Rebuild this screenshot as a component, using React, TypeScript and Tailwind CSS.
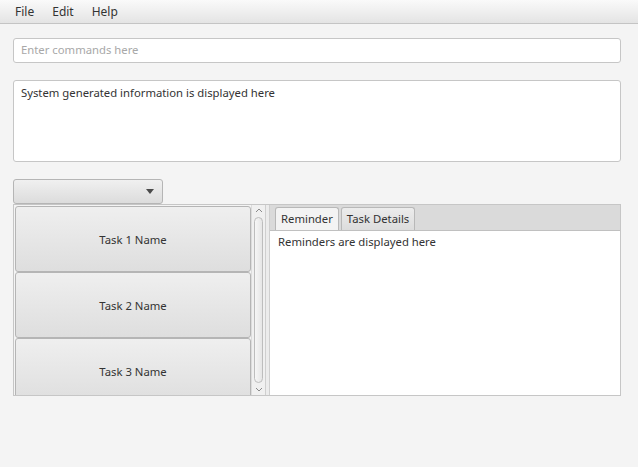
import { ReactNode } from "react";

const tasks: string[] = ["Task 1 Name", "Task 2 Name", "Task 3 Name"];

const font = { fontFamily: '"Noto Sans", "Open Sans", sans-serif' };

const TaskCard = ({ children }: { children: ReactNode }) => (
	<div className="h-[66px] shrink-0 flex items-center justify-center pt-[2px] rounded-[3px] border border-[#b5b5b5] bg-gradient-to-b from-[#efefef] to-[#dedede] text-[#333]">
		{children}
	</div>
);

const App = () => {
	return (
		<div
			className="w-[638px] h-[467px] bg-[#f4f4f4] text-[11.3px] text-[#333] overflow-hidden"
			style={font}
		>
			{/* menu bar */}
			<div className="h-[24px] flex items-center gap-[18px] px-[15px] text-[12px] bg-gradient-to-b from-[#fafafa] to-[#e4e4e4] border-b border-[#c4c4c4]">
				<span>File</span>
				<span>Edit</span>
				<span>Help</span>
			</div>

			<div className="px-[13px] pr-[17px] pt-[14px]">
				{/* command input */}
				<div className="h-[25px] flex items-center px-[7px] bg-white border border-[#c6c6c6] rounded-[3px] text-[#a8a8a8]">
					Enter commands here
				</div>

				{/* system info */}
				<div className="mt-[17px] h-[82px] px-[7px] pt-[4px] bg-white border border-[#c6c6c6] rounded-[3px]">
					System generated information is displayed here
				</div>

				{/* combo box */}
				<div className="mt-[17px] w-[150px] h-[25px] flex items-center justify-end pr-[8px] rounded-[3px] border border-[#b5b5b5] bg-gradient-to-b from-[#f0f0f0] to-[#dcdcdc]">
					<svg width="8" height="5" viewBox="0 0 8 5">
						<path d="M0 0h8L4 5z" fill="#4a4a4a" />
					</svg>
				</div>

				{/* split pane */}
				<div className="h-[192px] flex border border-[#c6c6c6]">
					{/* task list */}
					<div className="w-[251px] flex bg-[#f4f4f4]">
						<div className="flex-1 flex flex-col pl-[1px] pt-[1px] overflow-hidden">
							{tasks.map((t) => (
								<TaskCard key={t}>{t}</TaskCard>
							))}
						</div>
						{/* scroll bar */}
						<div className="w-[14px] flex flex-col items-center border-l border-[#dcdcdc] bg-[#f0f0f0]">
							<svg width="14" height="12" viewBox="0 0 14 12">
								<path d="M4 7l3-3 3 3" fill="none" stroke="#8a8a8a" strokeWidth="1" />
							</svg>
							<div className="flex-1 w-[9px] rounded-[5px] border border-[#bdbdbd] bg-gradient-to-r from-[#f6f6f6] to-[#e6e6e6]" />
							<svg width="14" height="12" viewBox="0 0 14 12">
								<path d="M4 5l3 3 3-3" fill="none" stroke="#8a8a8a" strokeWidth="1" />
							</svg>
						</div>
					</div>

					{/* divider */}
					<div className="w-[5px] bg-[#ececec] border-x border-[#cfcfcf]" />

					{/* tabs */}
					<div className="flex-1 flex flex-col">
						<div className="h-[26px] flex items-end gap-[2px] pl-[5px] bg-[#dadada] border-b border-[#c0c0c0]">
							<div className="h-[23px] px-[5px] flex items-center bg-[#f3f3f3] border border-b-0 border-[#b8b8b8] rounded-t-[3px]">
								Reminder
							</div>
							<div className="h-[23px] px-[5px] flex items-center bg-gradient-to-b from-[#ececec] to-[#dcdcdc] border border-b-0 border-[#b8b8b8] rounded-t-[3px]">
								Task Details
							</div>
						</div>
						<div className="flex-1 bg-white px-[8px] pt-[3px]">
							Reminders are displayed here
						</div>
					</div>
				</div>
			</div>
		</div>
	);
};

export default App;
